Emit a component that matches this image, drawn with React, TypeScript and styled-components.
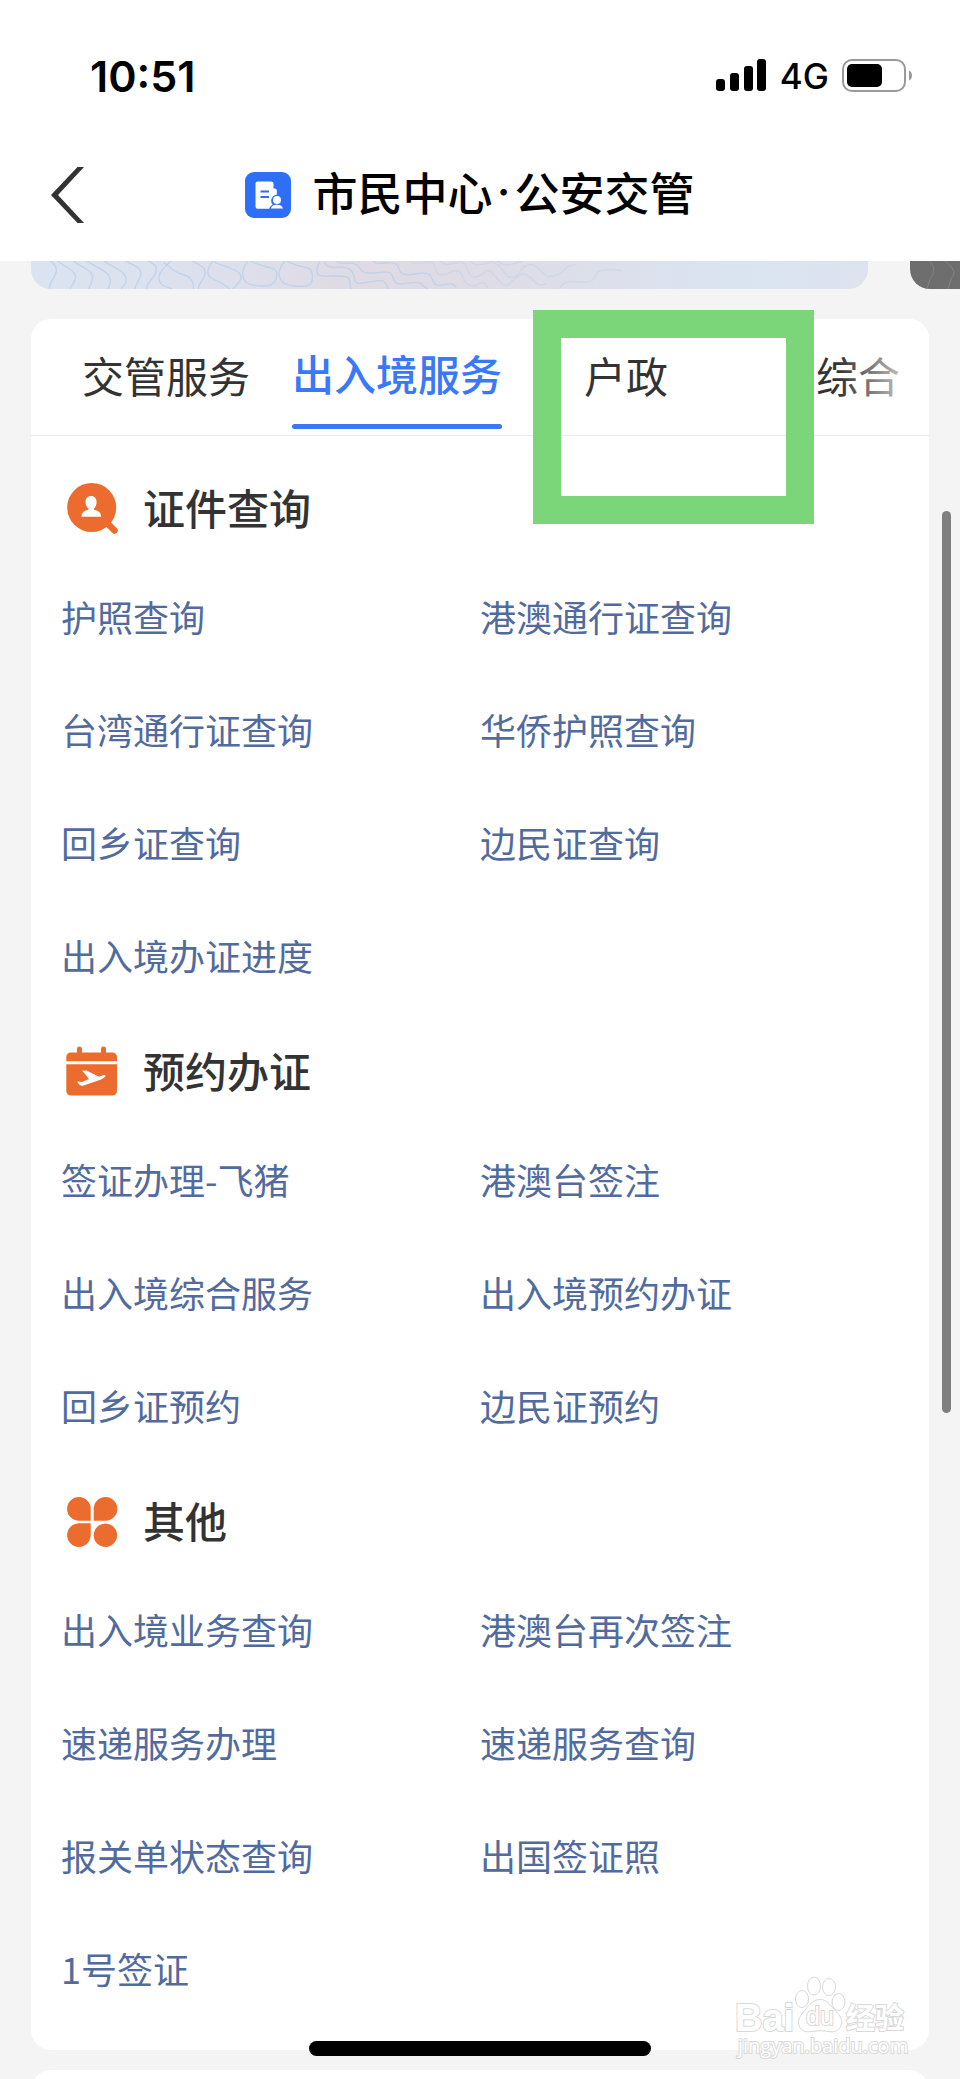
import React from "react";
import styled, { createGlobalStyle } from "styled-components";

const GlobalStyle = createGlobalStyle`
  * { box-sizing: border-box; }
  body {
    margin: 0;
    background: #f4f4f4;
    font-family: "Noto Sans CJK SC", "PingFang SC", sans-serif;
    color: #333;
  }
`;

const Page = styled.div`
  position: relative;
  display: flex;
  flex-direction: column;
  min-height: 100vh;
  overflow: hidden;
`;

const TopArea = styled.header`
  height: 261px;
  background: #fff;
`;

const StatusBar = styled.div`
  display: flex;
  align-items: center;
  justify-content: space-between;
  height: 128px;
  padding: 23px 48px 0 90px;
  font-family: Inter, sans-serif;
  color: #000;
`;

const Clock = styled.time`
  font-size: 43px;
  font-weight: 600;
  line-height: 48px;
`;

const StatusIcons = styled.div`
  display: flex;
  align-items: center;
  gap: 13px;
`;

const Network = styled.span`
  font-size: 35px;
  font-weight: 500;
  line-height: 40px;
`;

const NavBar = styled.div`
  display: grid;
  grid-template-columns: 1fr auto 1fr;
  align-items: center;
  height: 133px;
  padding: 0 70px 0 50px;
`;

const BackButton = styled.button`
  display: flex;
  justify-self: start;
  padding: 0;
  border: 0;
  background: none;
  cursor: pointer;
`;

const TitleGroup = styled.div`
  display: flex;
  align-items: center;
  gap: 21px;
`;

const Title = styled.h1`
  display: flex;
  margin: 0;
  padding-bottom: 6px;
  font-size: 45px;
  font-weight: 500;
  line-height: 60px;
  color: #000;
`;

const TitleDot = styled.span`
  width: 22px;
  text-align: center;
  font-family: Inter, sans-serif;
`;

const Banners = styled.div`
  display: flex;
  align-items: flex-end;
  gap: 42px;
  height: 28px;
  margin: 0 0 30px 31px;
  overflow: hidden;
`;

const Banner = styled.div<{ $dark?: boolean }>`
  flex: ${(p) => (p.$dark ? "0 0 50px" : "1")};
  height: 80px;
  overflow: hidden;
  border-radius: ${(p) => (p.$dark ? "0 0 0 20px" : "20px")};
  background: ${(p) =>
    p.$dark
      ? "#6e6e6e"
      : "linear-gradient(90deg, #dae4f0 0%, #dde0ec 22%, #dfdae4 40%, #dedce7 58%, #dae4f1 84%, #dde3ef 100%)"};

  svg {
    display: block;
    height: 80px;
  }
`;

const Card = styled.main`
  position: relative;
  margin: 0 31px 20px;
  padding-bottom: 22px;
  border-radius: 20px;
  background: #fff;
`;

const Tabs = styled.nav`
  position: relative;
  display: flex;
  gap: 42px;
  height: 117px;
  padding-left: 51px;
  border-bottom: 1px solid #ebebeb;

  &::after {
    content: "";
    position: absolute;
    top: 0;
    right: 0;
    width: 90px;
    height: 100%;
    border-radius: 0 20px 0 0;
    background: linear-gradient(90deg, rgba(255, 255, 255, 0), #fff);
    pointer-events: none;
  }
`;

const Tab = styled.button<{ $active?: boolean; $inset: number }>`
  position: relative;
  flex: none;
  height: 116px;
  padding: 0 ${(p) => p.$inset}px ${(p) => (p.$active ? 9 : 5)}px;
  border: 0;
  background: none;
  font-family: inherit;
  font-size: 42px;
  font-weight: ${(p) => (p.$active ? 500 : 400)};
  line-height: 60px;
  white-space: nowrap;
  color: ${(p) => (p.$active ? "#3a78f8" : "#333")};
  cursor: pointer;

  &::after {
    content: "";
    display: ${(p) => (p.$active ? "block" : "none")};
    position: absolute;
    left: 0;
    right: 0;
    bottom: 6px;
    height: 5px;
    border-radius: 3px;
    background: #3a78f8;
  }
`;

const Highlight = styled.div`
  position: absolute;
  z-index: 2;
  top: -9px;
  left: 502px;
  width: 281px;
  height: 214px;
  border: 28px solid #7bd67a;
  pointer-events: none;
`;

const Sections = styled.div`
  padding: 15px 30px 1px;
`;

const SectionHead = styled.div`
  display: flex;
  align-items: center;
  gap: 21px;
  height: 111px;
  padding: 3px 0 0 1px;
`;

const SectionTitle = styled.h2`
  margin: 0;
  padding-bottom: 3px;
  font-size: 42px;
  font-weight: 500;
  line-height: 60px;
`;

const Links = styled.div`
  display: grid;
  grid-template-columns: 1fr 1fr;
  grid-auto-rows: 113px;
  align-items: center;
`;

const ServiceLink = styled.a`
  justify-self: start;
  padding-bottom: 5px;
  font-size: 36px;
  line-height: 52px;
  white-space: nowrap;
  color: #526b9e;
  text-decoration: none;
`;

const NextCardPeek = styled.div`
  flex: none;
  height: 10px;
  margin: 0 31px;
  overflow: hidden;

  &::before {
    content: "";
    display: block;
    height: 80px;
    border-radius: 20px;
    background: #fff;
  }
`;

const ScrollThumb = styled.div`
  position: absolute;
  top: 511px;
  right: 9px;
  width: 9px;
  height: 902px;
  border-radius: 5px;
  background: #7f7f7f;
`;

const HomeIndicator = styled.div`
  position: absolute;
  bottom: 24px;
  left: 50%;
  width: 342px;
  height: 15px;
  margin-left: -171px;
  border-radius: 8px;
  background: #000;
`;

const Watermark = styled.svg`
  position: absolute;
  right: 49px;
  bottom: 16px;

  text {
    paint-order: stroke;
  }
`;

const orange = "#ec6c30";

const SearchPersonIcon = () => (
  <svg width="60" height="60" viewBox="0 0 60 60" aria-hidden="true">
    <path d="M43 43 52.500 52.500" stroke={orange} strokeWidth="6.500" strokeLinecap="round" />
    <circle cx="29.700" cy="29.500" r="24.500" fill={orange} />
    <path
      d="M29 18c3.600 0 5.600 2.600 5.600 6 0 2.600-1 5-2.600 6.400v1.300c4 1 7 2.300 7.200 7H19.500c.2-4.700 3-6 6.900-7v-1.300c-1.800-1.400-2.900-3.800-2.900-6.400 0-3.400 2-6 5.500-6z"
      fill="#fff"
    />
  </svg>
);

const CalendarPlaneIcon = () => (
  <svg width="60" height="60" viewBox="0 0 60 60" aria-hidden="true">
    <path
      d="M4.300 20.300V16a4.500 4.500 0 0 1 4.500-4.500H15V8a2.500 2.500 0 0 1 5 0v3.500h19V8a2.500 2.500 0 0 1 5 0v3.500h6.500A4.500 4.500 0 0 1 55 16v4.300zM4.300 23.300H55V50a4.500 4.500 0 0 1-4.500 4.500H8.800A4.500 4.500 0 0 1 4.300 50z"
      fill={orange}
    />
    <path
      d="M15.300 40.500l4.700.600 7-3.100-6.700-8.200 4.200-.3 12.500 6.300 4-1.500c2.500-.6 3.600.3 1.500 2-1 .9-2.500 1.600-4 2.400L21.500 44.600c-2.500.9-4.600-.6-6.200-4.100z"
      fill="#fff"
    />
  </svg>
);

const PetalsIcon = () => (
  <svg width="60" height="60" viewBox="0 0 60 60" fill={orange} aria-hidden="true">
    <path d="M28.700 29.700H17A11.800 11.800 0 1 1 28.700 18z" />
    <path d="M31.700 29.700V18A11.800 11.800 0 1 1 43.400 29.700z" />
    <path d="M28.700 32.300V44A11.800 11.800 0 1 1 17 32.300z" />
    <circle cx="43.400" cy="44.200" r="11.700" />
  </svg>
);

const SignalIcon = () => (
  <svg width="51" height="33" viewBox="0 0 51 33" aria-hidden="true">
    <rect x="0" y="20" width="9" height="12" rx="3" />
    <rect x="14" y="14" width="9" height="18" rx="3" />
    <rect x="28" y="7" width="9" height="25" rx="3" />
    <rect x="41" y="0" width="9" height="32" rx="3" />
  </svg>
);

const BatteryIcon = () => (
  <svg width="70" height="34" viewBox="0 0 70 34" aria-hidden="true">
    <rect x="1" y="1" width="62" height="31" rx="9" fill="none" stroke="#999" strokeWidth="2" />
    <rect x="5" y="5" width="35" height="23" rx="5" />
    <path d="M67 11.500c4 1.500 4 8.500 0 10z" fill="#999" />
  </svg>
);

const BackIcon = () => (
  <svg width="35" height="56" viewBox="0 0 35 56" aria-hidden="true">
    <path d="M1 28 27.500 0H34L8 28 34 56H27.500z" fill="#333" />
  </svg>
);

const AppLogo = () => (
  <svg width="46" height="46" viewBox="0 0 46 46" aria-hidden="true">
    <rect width="46" height="46" rx="9" fill="#2f6ef7" />
    <path
      d="M12.500 9.500H26a2.500 2.500 0 0 1 2.500 2.500v4.500h1.300a2 2 0 0 1 2 2v4.200c-4 .5-6 3.500-5.500 7 .2 1.500.8 2.300 1.500 3-2 .8-3.300 2.300-3.500 4H12.500a2 2 0 0 1-2-2V11.500a2 2 0 0 1 2-2z"
      fill="#fff"
    />
    <path d="M15.500 19.500h8.500M15.500 25h8.500" stroke="#2f6ef7" strokeWidth="2.200" />
    <circle cx="32" cy="28" r="4" fill="#fff" />
    <path d="M26 36.500c.6-3 3-3.800 6-3.800s5.300.8 6 3.800z" fill="#fff" />
  </svg>
);

const contours = [
  "M55 5C90 25 80 45 68 65S60 85 58 95",
  "M80 5C95 25 130 30 136 52S120 80 120 95",
  "M128 5C140 25 182 30 187 52S177 80 177 95",
  "M168 5C185 25 235 35 240 60S236 80 235 95",
  "M220 5C235 25 285 35 288 60S276 80 275 95",
  "M282 5C300 20 336 25 333 48S316 75 315 95",
  "M348 5C365 15 385 20 378 42S348 75 350 95",
  "M428 5C410 22 385 40 387 62S410 86 430 95",
  "M400 12C420 25 430 42 455 48S495 70 490 95",
  "M478 5C500 15 530 25 526 48S505 70 505 95",
  "M552 5C540 20 528 42 538 55S580 70 600 95",
  "M552 12C580 25 615 30 628 45S632 70 608 95",
  "M658 5C640 25 632 50 644 68S715 88 728 78S745 50 738 38S680 25 658 5",
  "M768 5C750 25 742 50 754 68S820 88 836 82S850 45 842 35S785 25 768 5",
  "M872 5C862 25 855 48 872 53S945 48 956 60S955 80 965 95",
  "M882 5C885 25 900 30 920 28S962 28 970 45S970 75 990 76S1050 62 1062 70S1068 85 1078 95",
  "M915 5C925 20 950 14 970 16S990 42 1010 45S1070 36 1082 46S1090 78 1110 78S1165 66 1175 78L1195 95",
  "M1025 5C1040 22 1060 14 1080 14S1105 20 1108 32S1120 52 1140 50S1190 40 1200 50S1210 85 1232 82S1265 70 1280 88",
];

const faintContours = [
  "M1140 5C1150 22 1175 16 1195 12S1215 25 1220 40S1250 52 1265 42S1295 40 1300 58S1325 90 1340 82S1362 66 1375 90",
  "M1230 5C1245 30 1265 18 1285 12S1310 25 1318 45S1350 58 1365 42S1395 55 1410 70S1430 88 1450 68S1480 40 1498 55S1525 90 1550 78",
  "M1320 5C1335 30 1360 20 1380 12S1415 35 1430 50S1460 60 1475 38S1510 12 1530 35S1560 60 1585 50S1605 20 1640 20",
  "M1400 5C1430 35 1450 15 1480 10M1590 92C1600 70 1620 68 1650 72S1695 70 1700 50S1740 35 1780 38",
];

const BlueContours = () => (
  <svg width="837" height="80" viewBox="0 0 837 80" fill="none" stroke="#aacbf0" aria-hidden="true">
    <g transform="translate(-1 49) scale(0.333)" strokeWidth="4">
      {contours.map((d) => (
        <path key={d} d={d} opacity="0.6" />
      ))}
      {faintContours.map((d) => (
        <path key={d} d={d} opacity="0.3" />
      ))}
    </g>
  </svg>
);

const DarkContours = () => (
  <svg width="50" height="80" viewBox="0 0 50 80" fill="none" stroke="#858585" aria-hidden="true">
    <path d="M18 50c8 9 7 14 2 20l-3 10M32 50c13 9 14 14 9 20l-3 10" />
  </svg>
);

const sections = [
  {
    title: "证件查询",
    Icon: SearchPersonIcon,
    links: ["护照查询", "港澳通行证查询", "台湾通行证查询", "华侨护照查询", "回乡证查询", "边民证查询", "出入境办证进度"],
  },
  {
    title: "预约办证",
    Icon: CalendarPlaneIcon,
    links: ["签证办理-飞猪", "港澳台签注", "出入境综合服务", "出入境预约办证", "回乡证预约", "边民证预约"],
  },
  {
    title: "其他",
    Icon: PetalsIcon,
    links: ["出入境业务查询", "港澳台再次签注", "速递服务办理", "速递服务查询", "报关单状态查询", "出国签证照", "1号签证"],
  },
];

const tabs = [
  { label: "交管服务", inset: 0 },
  { label: "出入境服务", inset: 0, active: true },
  { label: "户政", inset: 40 },
  { label: "综合", inset: 66 },
];

export default function App() {
  return (
    <>
      <GlobalStyle />
      <Page>
        <TopArea>
          <StatusBar>
            <Clock>10:51</Clock>
            <StatusIcons>
              <SignalIcon />
              <Network>4G</Network>
              <BatteryIcon />
            </StatusIcons>
          </StatusBar>
          <NavBar>
            <BackButton type="button" aria-label="返回">
              <BackIcon />
            </BackButton>
            <TitleGroup>
              <AppLogo />
              <Title>
                市民中心<TitleDot>·</TitleDot>公安交管
              </Title>
            </TitleGroup>
          </NavBar>
        </TopArea>

        <Banners>
          <Banner>
            <BlueContours />
          </Banner>
          <Banner $dark>
            <DarkContours />
          </Banner>
        </Banners>

        <Card>
          <Tabs>
            {tabs.map((tab) => (
              <Tab key={tab.label} type="button" $active={tab.active} $inset={tab.inset}>
                {tab.label}
              </Tab>
            ))}
          </Tabs>
          <Highlight />
          <Sections>
            {sections.map(({ title, Icon, links }) => (
              <section key={title}>
                <SectionHead>
                  <Icon />
                  <SectionTitle>{title}</SectionTitle>
                </SectionHead>
                <Links>
                  {links.map((link) => (
                    <ServiceLink key={link} href="#">
                      {link}
                    </ServiceLink>
                  ))}
                </Links>
              </section>
            ))}
          </Sections>
        </Card>
        <NextCardPeek />

        <ScrollThumb />
        <HomeIndicator />
        <Watermark
          width="176"
          height="90"
          viewBox="0 0 176 90"
          fill="#fff"
          stroke="#d9d9d9"
          strokeWidth="2"
          aria-label="Baidu 经验"
        >
          <text x="0" y="57" fontFamily="Liberation Sans, sans-serif" fontWeight="700" fontSize="38">
            Bai
          </text>
          <g strokeWidth="1">
            <ellipse cx="67" cy="25" rx="6.500" ry="8.500" />
            <ellipse cx="79" cy="12" rx="6.500" ry="9" />
            <ellipse cx="94" cy="13" rx="6.500" ry="8.500" />
            <ellipse cx="103.500" cy="28" rx="6.500" ry="8.500" />
            <path d="M85 25.500c8 0 11 7 16 12s7 9 5 14c-2 6-8 7-13 6s-11-1-16 0-11 0-13-6c-2-5 1-9 5-14s8-12 16-12z" />
          </g>
          <text x="71" y="51" fontFamily="Liberation Sans, sans-serif" fontSize="25">
            du
          </text>
          <text x="111" y="55" fontFamily="Noto Sans CJK SC, sans-serif" fontWeight="700" fontSize="29">
            经验
          </text>
          <text x="3" y="79" fontFamily="Open Sans, sans-serif" fontSize="20">
            jingyan.baidu.com
          </text>
        </Watermark>
      </Page>
    </>
  );
}
